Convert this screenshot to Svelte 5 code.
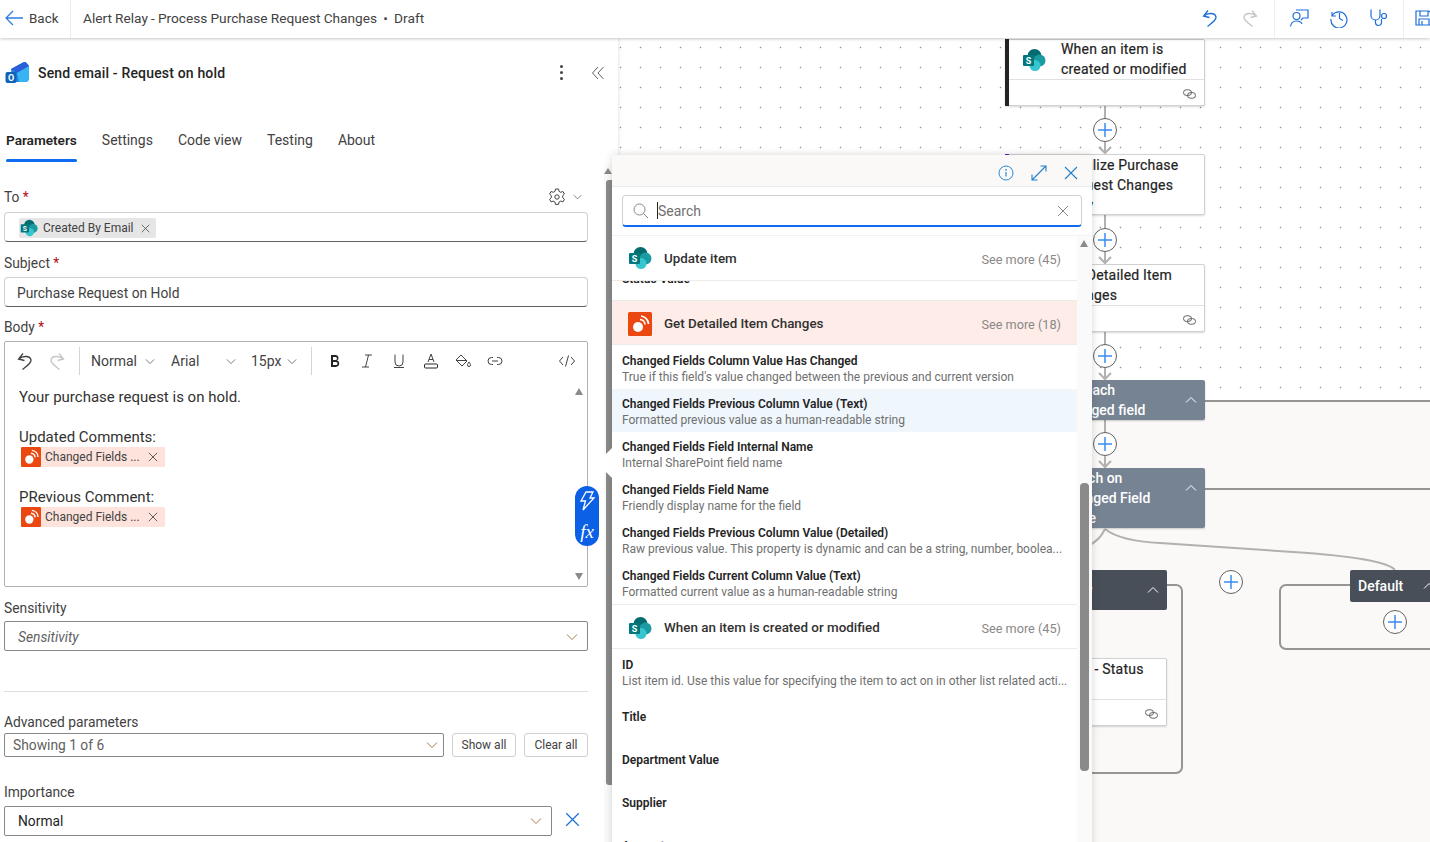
<script>
  const tabs = ['Parameters', 'Settings', 'Code view', 'Testing', 'About'];
  const formatIcons = ['bold', 'italic', 'underline', 'color', 'fill', 'link'];
  const changedItems = [
    { t: 'Changed Fields Column Value Has Changed', d: "True if this field's value changed between the previous and current version" },
    { t: 'Changed Fields Previous Column Value (Text)', d: 'Formatted previous value as a human-readable string', on: true },
    { t: 'Changed Fields Field Internal Name', d: 'Internal SharePoint field name' },
    { t: 'Changed Fields Field Name', d: 'Friendly display name for the field' },
    { t: 'Changed Fields Previous Column Value (Detailed)', d: 'Raw previous value. This property is dynamic and can be a string, number, boolea...' },
    { t: 'Changed Fields Current Column Value (Text)', d: 'Formatted current value as a human-readable string' }
  ];
  const triggerItems = [
    { t: 'ID', d: 'List item id. Use this value for specifying the item to act on in other list related acti...' },
    { t: 'Title', d: '' },
    { t: 'Department Value', d: '' },
    { t: 'Supplier', d: '' },
    { t: 'Amount', d: '' }
  ];
  const OX = 618, OY = 38;
  const plusNodes = [[1105, 130], [1105, 240], [1105, 356], [1105, 444], [1231, 582], [1395, 622]];
  const arrows = [[106, 154], [215, 264], [332, 380], [420, 468]];
  const cards = [
    { x: 1005, y: 39, w: 200, h: 67, lines: ['When an item is', 'created or modified'], tx: 1060, ty: -1, bar: '#242424', div: 39, sp: true },
    { x: 1005, y: 154, w: 200, h: 61, lines: ['Initialize Purchase', 'Request Changes', 'Copy'], tx: 1060, ty: 0, bar: '#6b1fb1' },
    { x: 1005, y: 264, w: 200, h: 68, lines: ['Get Detailed Item', 'Changes'], tx: 1060, ty: 0, div: 40 },
    { x: 1005, y: 658, w: 162, h: 68, lines: ['Set - Status'], tx: 1069, ty: 0, div: 40 }
  ];
  const groups = [
    { y: 380, h: 40, lines: ['For each', 'changed field'] },
    { y: 468, h: 60, lines: ['Switch on', 'Changed Field', 'Value'] }
  ];
</script>

{#snippet sharepoint(size)}
  <svg class="sp" width={size} height={size} viewBox="0 0 24 24" aria-hidden="true">
    <circle cx="12.5" cy="8" r="7" fill="#036c70"/>
    <circle cx="17.5" cy="12.5" r="6" fill="#1a9ba1"/>
    <circle cx="13" cy="17.5" r="5.5" fill="#37c6d0"/>
    <rect x="1" y="7" width="11" height="11" rx="1" fill="#03787c"/>
    <text x="6.5" y="15.8" font-size="9" font-weight="700" text-anchor="middle" fill="#fff" font-family="Roboto, sans-serif">S</text>
  </svg>
{/snippet}

{#snippet rss(size)}
  <svg width={size} height={size} viewBox="0 0 24 24" aria-hidden="true">
    <rect width="24" height="24" rx="1.5" fill="#eb4710"/>
    <circle cx="10" cy="15" r="5" fill="#fff"/>
    <path d="M12 7.5a5.5 5.5 0 0 1 5 5M13 4a8.5 8.5 0 0 1 7.5 8" fill="none" stroke="#fff" stroke-width="1.7"/>
  </svg>
{/snippet}

{#snippet chevron(cls)}
  <svg class={cls} width="12" height="8" viewBox="0 0 12 8" aria-hidden="true"><path d="M1 1.5l5 5 5-5" fill="none" stroke="currentColor" stroke-width="1"/></svg>
{/snippet}

{#snippet cross(size, cls)}
  <svg class={cls} width={size} height={size} viewBox="0 0 12 12" aria-hidden="true"><path d="M1 1l10 10M11 1L1 11" fill="none" stroke="currentColor" stroke-width="1"/></svg>
{/snippet}

{#snippet linkIcon()}
  <svg width="13" height="10" viewBox="0 0 13 10" aria-hidden="true"><g fill="none" stroke="#616161" stroke-width="1"><rect x=".5" y=".8" width="8" height="5.6" rx="2.8"/><rect x="4.5" y="3.6" width="8" height="5.6" rx="2.8"/></g></svg>
{/snippet}

{#snippet undo(c)}
  <svg width="20" height="20" viewBox="0 0 20 20" aria-hidden="true"><path d="M8 2.5L3.5 8l6 1.500M3.500 8C8 4.500 15 4.500 16 9c.5 3-4 6-8.500 9.500" fill="none" stroke={c} stroke-width="1.300"/></svg>
{/snippet}
{#snippet redo(c)}
  <svg width="20" height="20" viewBox="0 0 20 20" aria-hidden="true"><path d="M12 2.500L16.500 8l-6 1.500M16.500 8C12 4.500 5 4.500 4 9c-.5 3 4 6 8.500 9.500" fill="none" stroke={c} stroke-width="1.300"/></svg>
{/snippet}

{#snippet field(label)}
  <span class="token"><span class="tokicon">{@render rss(20)}</span><span class="toktext">{label}</span>{@render cross(10, 'tokx')}</span>
{/snippet}

<div class="page">
  <header class="topbar">
    <button class="back">
      <svg width="20" height="20" viewBox="0 0 20 20" aria-hidden="true"><path d="M9 3l-7 7 7 7M2 10h17" fill="none" stroke="#2f7fe0" stroke-width="1.300"/></svg>
      <span>Back</span>
    </button>
    <div class="crumb">Alert Relay - Process Purchase Request Changes&nbsp; • &nbsp;Draft</div>
    <div class="actions">
      <div class="act-group">
        <span class="act">{@render undo('#1f6fd6')}</span>
        <span class="act">{@render redo('#c8c6c4')}</span>
      </div>
      <div class="act-group bordered">
        <span class="act"><svg width="20" height="20" viewBox="0 0 20 20" aria-hidden="true"><g fill="none" stroke="#1f6fd6" stroke-width="1.200"><circle cx="7.500" cy="8" r="3.500"/><path d="M1.500 18.500c.5-3.500 2.500-5.500 6-5.500s5 1.500 5.500 3M7 2h12v8h-5l-2 2"/></g></svg></span>
        <span class="act"><svg width="20" height="20" viewBox="0 0 20 20" aria-hidden="true"><g fill="none" stroke="#1f6fd6" stroke-width="1.200"><path d="M3 4v4h4M3.300 7.500A8 8 0 1 1 2 11"/><path d="M10.500 5v5.500l3.500 2"/></g></svg></span>
        <span class="act"><svg width="20" height="20" viewBox="0 0 20 20" aria-hidden="true"><g fill="none" stroke="#1f6fd6" stroke-width="1.200"><path d="M2 1.500v6a4.500 4.500 0 0 0 9 0v-6"/><path d="M6.500 12v2.500a3 3 0 0 0 6 0V11"/><circle cx="15" cy="8" r="2.500"/></g></svg></span>
      </div>
      <div class="act-group bordered save">
        <span class="act"><svg width="20" height="20" viewBox="0 0 20 20" aria-hidden="true"><g fill="none" stroke="#1f6fd6" stroke-width="1.200"><path d="M2 3h13l3 3v11H2z"/><path d="M6 3v5h8V3M5 17v-6h10v6M8 13v4"/></g></svg></span>
      </div>
    </div>
  </header>

  <div class="main">
    <aside class="panel">
      <div class="panel-head">
        <svg width="24" height="24" viewBox="0 0 24 24" aria-hidden="true">
          <path d="M6 8L18 1.500q2-1 3.500.5L24 5v12a4 4 0 0 1-4 4H7z" fill="#1b8be8"/>
          <path d="M6 8L18 1.500q2-1 3.500.5L24 5 12 12z" fill="#2a5fd8"/>
          <path d="M12 12L24 5v12a4 4 0 0 1-4 4h-6z" fill="#38b4f2"/>
          <rect x="0.500" y="11" width="11" height="11" rx="2" fill="#0f63b8"/>
          <text x="6" y="19.800" font-size="9" font-weight="700" text-anchor="middle" fill="#fff" font-family="Roboto, sans-serif">O</text>
        </svg>
        <h1>Send email - Request on hold</h1>
        <span class="kebab"><i></i><i></i><i></i></span>
        <svg class="collapse" width="14" height="14" viewBox="0 0 14 14" aria-hidden="true"><path d="M7 1L1.500 7 7 13M12.500 1L7 7l5.500 6" fill="none" stroke="#616161" stroke-width="1"/></svg>
      </div>

      <nav class="tabs">
        {#each tabs as tab, i}
          <span class="tab" class:active={i === 0}>{tab}</span>
        {/each}
      </nav>

      <div class="form">
        <div class="label to-label">
          <span>To <b>*</b></span>
          <span class="gear">
            <svg width="20" height="20" viewBox="0 0 20 20" aria-hidden="true"><g fill="none" stroke="#424242" stroke-width="1"><path d="M8.500 2h3l.5 2.300 1.700 1 2.200-.8 1.500 2.600-1.700 1.600v2l1.700 1.600-1.500 2.600-2.200-.8-1.700 1-.5 2.300h-3l-.5-2.300-1.700-1-2.200.8-1.500-2.600 1.700-1.600v-2L2.600 7.100l1.500-2.600 2.200.8 1.700-1z"/><circle cx="10" cy="10" r="2.200"/></g></svg>
            {@render chevron('gear-chev')}
          </span>
        </div>
        <div class="box nudge to-box">
          <span class="chip">{@render sharepoint(18)}<span>Created By Email</span>{@render cross(9, 'chipx')}</span>
        </div>

        <div class="label subj-label">Subject <b>*</b></div>
        <div class="box nudge subj-box">Purchase Request on Hold</div>

        <div class="label body-label">Body <b>*</b></div>
        <div class="editor">
          <div class="toolbar">
            <span class="tb">{@render undo('#424242')}</span>
            <span class="tb">{@render redo('#c8c6c4')}</span>
            <span class="sep first"></span>
            <span class="dd normal">Normal {@render chevron('dd-chev')}</span>
            <span class="dd arial">Arial {@render chevron('dd-chev')}</span>
            <span class="dd px">15px {@render chevron('dd-chev')}</span>
            <span class="sep"></span>
            {#each formatIcons as f}
              <span class="tb fmt">
                {#if f === 'bold'}
                  <svg width="16" height="16" viewBox="0 0 16 16" aria-hidden="true"><path d="M4 2h4.500a3 3 0 0 1 1.500 5.600A3.300 3.300 0 0 1 9 14H4zM6 4v3h2.500a1.500 1.500 0 0 0 0-3zm0 5v3h3a1.500 1.500 0 0 0 0-3z" fill="#242424" fill-rule="evenodd"/></svg>
                {:else if f === 'italic'}
                  <svg width="16" height="16" viewBox="0 0 16 16" aria-hidden="true"><path d="M6 2h7M3 14h7M9.500 2L6.500 14" fill="none" stroke="#424242"/></svg>
                {:else if f === 'underline'}
                  <svg width="16" height="16" viewBox="0 0 16 16" aria-hidden="true"><path d="M4 1.500V9a4 4 0 0 0 8 0V1.500M3 14.500h10" fill="none" stroke="#424242"/></svg>
                {:else if f === 'color'}
                  <svg width="16" height="16" viewBox="0 0 16 16" aria-hidden="true"><path d="M5 9l3-8 3 8M6 6.500h4" fill="none" stroke="#424242"/><rect x="1.500" y="11" width="13" height="4" rx="1" fill="none" stroke="#242424"/></svg>
                {:else if f === 'fill'}
                  <svg width="18" height="16" viewBox="0 0 18 16" aria-hidden="true"><path d="M7 2l6 6-5 5-6-6zM2 7.500h11" fill="none" stroke="#424242"/><path d="M15 9c1 1.500 1.500 2.200 1.500 3a1.500 1.500 0 0 1-3 0c0-.8.500-1.500 1.500-3z" fill="none" stroke="#424242"/></svg>
                {:else}
                  <svg width="16" height="16" viewBox="0 0 16 16" aria-hidden="true"><path d="M6 4.500H4.500a3.500 3.500 0 0 0 0 7H6M10 4.500h1.500a3.500 3.500 0 0 1 0 7H10M5 8h6" fill="none" stroke="#424242"/></svg>
                {/if}
              </span>
            {/each}
            <span class="tb code"><svg width="18" height="16" viewBox="0 0 18 16" aria-hidden="true"><path d="M5 4L1.500 8 5 12M13 4l3.500 4-3.500 4M10.500 2.500l-3 11" fill="none" stroke="#424242"/></svg></span>
          </div>
          <div class="body-text">
            <p>Your purchase request is on hold.</p>
            <p class="gap">Updated Comments:</p>
            {@render field('Changed Fields ...')}
            <p class="gap">PRevious Comment:</p>
            {@render field('Changed Fields ...')}
          </div>
          <i class="arr up"></i>
          <i class="arr down"></i>
          <div class="pill">
            <svg width="18" height="22" viewBox="0 0 18 22" aria-hidden="true"><path d="M8 2h7l-3 6h4L5 20l2.500-9H3z" fill="none" stroke="#fff" stroke-width="1.300"/></svg>
            <span>fx</span>
          </div>
        </div>

        <div class="label sens-label">Sensitivity</div>
        <div class="box nudge select sens"><em>Sensitivity</em>{@render chevron('sel-chev')}</div>

        <hr />

        <div class="label adv-label">Advanced parameters</div>
        <div class="adv-row">
          <div class="box select showing"><span>Showing 1 of 6</span>{@render chevron('sel-chev')}</div>
          <span class="btn">Show all</span>
          <span class="btn">Clear all</span>
        </div>

        <div class="label imp-label">Importance</div>
        <div class="imp-row">
          <div class="box select imp"><span>Normal</span>{@render chevron('sel-chev')}</div>
          {@render cross(15, 'imp-x')}
        </div>
      </div>

      <div class="panel-track"><i class="arr up2"></i><div class="panel-thumb"></div></div>
    </aside>

    <section class="canvas">
      <svg class="wires" viewBox="618 38 812 804" aria-hidden="true">
        <path d="M1060 401H1430V842H1060z" fill="#faf9f8"/>
        <g fill="none" stroke="#979593" stroke-width="2">
          <path d="M1205 401H1430M1205 489H1430"/>
          <path d="M1167 585H1176a6 6 0 0 1 6 6V767a6 6 0 0 1-6 6H1060"/>
          <path d="M1350 585H1286a6 6 0 0 0-6 6V643a6 6 0 0 0 6 6H1430"/>
        </g>
        <g fill="none" stroke="#b3b0ad" stroke-width="2">
          {#each arrows as [a, b]}
            <path d="M1105 {a}V{b - 1}M1099 {b - 7}L1105 {b - 1}L1111 {b - 7}"/>
          {/each}
          <path d="M1105 529Q1120 541 1160 543L1293 552Q1385 558 1395 570"/>
          <path d="M1105 529Q1100 540 1088 546"/>
        </g>
      </svg>

      {#each cards as c}
        <div class="card" style="left:{c.x - OX}px;top:{c.y - OY}px;width:{c.w}px;height:{c.h}px">
          {#if c.bar}<i class="cardbar" style="background:{c.bar}"></i>{/if}
          {#if c.sp}<span class="cardicon">{@render sharepoint(24)}</span>{/if}
          <div class="cardtext" style="left:{c.tx - c.x}px;top:{c.ty}px">
            {#each c.lines as l}<div>{l}</div>{/each}
          </div>
          {#if c.div}
            <div class="carddiv" style="top:{c.div}px"></div>
            <span class="cardlink">{@render linkIcon()}</span>
          {/if}
        </div>
      {/each}

      {#each groups as g}
        <div class="group" style="top:{g.y - OY}px;height:{g.h}px">
          <div class="grouptext">{#each g.lines as l}<div>{l}</div>{/each}</div>
          <svg class="groupchev" width="12" height="8" viewBox="0 0 12 8" aria-hidden="true"><path d="M1 6.500l5-5 5 5" fill="none" stroke="#fff" stroke-width="1"/></svg>
        </div>
      {/each}

      <div class="case case-left">
        <span>Case</span>
        <svg class="groupchev" width="12" height="8" viewBox="0 0 12 8" aria-hidden="true"><path d="M1 6.500l5-5 5 5" fill="none" stroke="#fff" stroke-width="1"/></svg>
      </div>
      <div class="case case-default">
        <span>Default</span>
        <svg class="groupchev" width="12" height="8" viewBox="0 0 12 8" aria-hidden="true"><path d="M1 6.500l5-5 5 5" fill="none" stroke="#fff" stroke-width="1"/></svg>
      </div>

      {#each plusNodes as [x, y]}
        <span class="plus" style="left:{x - OX - 12}px;top:{y - OY - 12}px">
          <svg width="14" height="14" viewBox="0 0 14 14" aria-hidden="true"><path d="M7 0v14M0 7h14" stroke="#3b8cf0" stroke-width="1.500"/></svg>
        </span>
      {/each}
    </section>

    <div class="picker">
      <i class="callout"></i>
      <div class="pick-head">
        <svg width="16" height="16" viewBox="0 0 16 16" aria-hidden="true"><circle cx="8" cy="8" r="7" fill="none" stroke="#2b88d8"/><path d="M8 7v4.500" stroke="#2b88d8" stroke-width="1.200"/><circle cx="8" cy="4.800" r=".9" fill="#2b88d8"/></svg>
        <svg width="16" height="16" viewBox="0 0 16 16" aria-hidden="true"><path d="M1 15L15 1M9.500 1H15v5.500M1 9.500V15h5.500" fill="none" stroke="#1f7fd0" stroke-width="1.100"/></svg>
        <svg width="14" height="14" viewBox="0 0 14 14" aria-hidden="true"><path d="M1 1l12 12M13 1L1 13" fill="none" stroke="#1f7fd0" stroke-width="1.100"/></svg>
      </div>
      <div class="search-wrap">
        <div class="search">
          <svg width="16" height="16" viewBox="0 0 16 16" aria-hidden="true"><circle cx="6.500" cy="6.500" r="5.500" fill="none" stroke="#8a8886"/><path d="M10.500 10.500L15 15" stroke="#8a8886"/></svg>
          <i class="caret"></i>
          <span>Search</span>
          {@render cross(12, 'search-x')}
        </div>
      </div>
      <div class="pick-body">
        <div class="list">
          <div class="sec">
            {@render sharepoint(24)}
            <span class="sec-name">Update item</span>
            <span class="more">See more (45)</span>
          </div>
          <div class="clipped"><div>Status Value</div></div>
          <div class="sec sec-hot">
            {@render rss(24)}
            <span class="sec-name">Get Detailed Item Changes</span>
            <span class="more">See more (18)</span>
          </div>
          <div class="items">
            {#each changedItems as it}
              <div class="item" class:on={it.on}>
                <div class="it-t">{it.t}</div>
                <div class="it-d">{it.d}</div>
              </div>
            {/each}
          </div>
          <div class="sec sec-last">
            {@render sharepoint(24)}
            <span class="sec-name">When an item is created or modified</span>
            <span class="more">See more (45)</span>
          </div>
          <div class="items">
            {#each triggerItems as it}
              <div class="item" class:nodesc={!it.d}>
                <div class="it-t">{it.t}</div>
                {#if it.d}<div class="it-d">{it.d}</div>{/if}
              </div>
            {/each}
          </div>
        </div>
        <div class="pick-track"><i class="arr up3"></i><div class="pick-thumb"></div></div>
      </div>
    </div>
  </div>
</div>

<style>
  :global(body) { margin: 0; background: #fff; overflow: hidden; }
  * { box-sizing: border-box; }
  .page { width: 1430px; height: 842px; overflow: hidden; font-family: Roboto, "Noto Sans", sans-serif; font-size: 14px; color: #242424; display: flex; flex-direction: column; }

  .topbar { height: 38px; flex: none; display: flex; align-items: stretch; background: #fff; box-shadow: 0 1px 3px rgba(0,0,0,.22); position: relative; z-index: 5; }
  .back { all: unset; display: flex; align-items: center; gap: 5px; width: 71px; padding: 0 0 2px 4px; border-right: 1px solid #edebe9; color: #424242; font-size: 13.4px; box-sizing: border-box; }
  .crumb { margin-left: 12px; color: #424242; font-size: 13.7px; white-space: nowrap; display: flex; align-items: center; padding-bottom: 2px; word-spacing: -.3px; }
  .actions { margin-left: auto; display: flex; margin-right: -14px; flex: none; }
  .act-group { display: flex; align-items: center; padding: 0 4px 2px; }
  .bordered { border-left: 1px solid #f0efee; }
  .save { padding: 0 0 2px; }
  .act { width: 40px; display: flex; justify-content: center; }

  .main { flex: 1; display: flex; position: relative; min-height: 0; }
  .panel { width: 618px; flex: none; background: #fff; position: relative; z-index: 2; box-shadow: 1px 0 3px rgba(0,0,0,.1); overflow: hidden; }
  .panel-head { height: 69px; display: flex; align-items: center; padding-left: 5px; }
  .panel-head h1 { margin: 0 0 0 9px; font-size: 14px; font-weight: 500; letter-spacing: .17px; color: #242424; flex: 1; }
  .kebab { display: flex; flex-direction: column; gap: 3px; margin-right: 28px; }
  .kebab i { width: 3px; height: 3px; border-radius: 50%; background: #424242; }
  .collapse { margin-right: 13px; }

  .tabs { display: flex; gap: 25px; height: 42px; margin-top: 13px; padding-left: 6px; }
  .tab { height: 42px; line-height: 40px; color: #424242; font-size: 14px; position: relative; }
  .tab.active { font-weight: 600; font-size: 13.6px; color: #242424; }
  .tab.active::after { content: ''; position: absolute; left: 0; right: 0; bottom: 0; height: 3px; border-radius: 2px; background: #0f6cf0; }

  .form { padding-left: 4px; width: 588px; margin-top: 25px; }
  .label { height: 20px; line-height: 20px; font-size: 13.8px; color: #424242; }
  .label b { color: #b10e1c; font-weight: 400; }
  .to-label { display: flex; justify-content: space-between; margin-bottom: 5px; }
  .gear { display: flex; align-items: center; gap: 6px; margin-right: 6px; }
  :global(.gear-chev) { width: 9px; height: 6px; color: #616161; }
  .box { border: 1px solid #d1d1d1; border-bottom-color: #616161; border-radius: 4px; height: 30px; display: flex; align-items: center; padding: 0 12px; color: #424242; background: #fff; font-size: 13.8px; }
  .nudge { padding-top: 2px; }
  .to-box { padding-left: 14px; }
  .chip { display: flex; align-items: center; height: 20px; width: 137px; background: #e6e6e6; border-radius: 2px; font-size: 12px; padding-left: 1px; }
  .chip span { margin-left: 5px; }
  :global(.chipx) { margin-left: 7px; color: #424242; }
  .subj-label { margin-top: 11px; margin-bottom: 4px; }
  .body-label { margin-top: 10px; margin-bottom: 4px; }
  .editor { height: 246px; border: 1px solid #b3b0ad; border-radius: 2px; position: relative; }
  .toolbar { display: flex; align-items: center; height: 38px; padding-left: 4px; }
  .tb { width: 32px; display: flex; justify-content: center; align-items: center; flex: none; }
  .sep { width: 1px; height: 28px; background: #d6d4d2; flex: none; margin-left: 6px; }
  .sep.first { margin-right: 11px; }
  .dd { display: flex; align-items: center; justify-content: space-between; flex: none; color: #424242; }
  .dd.normal { width: 72px; padding-right: 8px; }
  .dd.arial { width: 72px; margin-left: 8px; padding-right: 7px; }
  .dd.px { width: 52px; margin-left: 8px; padding-right: 6px; }
  :global(.dd-chev) { width: 10px; height: 7px; color: #616161; }
  .sep:not(.first) { margin-left: 8px; margin-right: 7px; }
  .code { margin-left: auto; margin-right: 4px; }
  .body-text { padding: 7px 0 0 14px; font-size: 15px; color: #323130; line-height: 20px; }
  .body-text p { margin: 0; height: 20px; }
  .body-text .gap { margin-top: 20px; }
  .token { display: flex; align-items: center; width: 144px; height: 20px; margin-left: 2px; background: #fde3dc; font-size: 12px; border-radius: 1px; }
  .tokicon { display: flex; width: 20px; height: 20px; flex: none; }
  .toktext { margin-left: 4px; color: #424242; width: 94px; white-space: nowrap; flex: none; }
  :global(.tokx) { margin-left: 9px; color: #424242; }
  .arr { position: absolute; width: 0; height: 0; border-left: 4.500px solid transparent; border-right: 4.500px solid transparent; }
  .arr.up { right: 4px; top: 46px; border-bottom: 7px solid #8a8a8a; }
  .arr.down { right: 4px; bottom: 6px; border-top: 7px solid #8a8a8a; }
  .pill { position: absolute; left: 570px; top: 144px; width: 24px; height: 60px; border-radius: 12px; background: #0b60e6; color: #fff; display: flex; flex-direction: column; align-items: center; justify-content: space-between; padding: 4px 0 3px; z-index: 3; }
  .pill span { font-family: "Liberation Serif", serif; font-style: italic; font-size: 19px; line-height: 22px; }
  .sens-label { margin-top: 11px; margin-bottom: 3px; }
  .select { justify-content: space-between; border-color: #8a8886; border-radius: 2px; }
  .select em { color: #616161; }
  .sens { padding-left: 13px; }
  :global(.sel-chev) { color: #a07c48; margin-right: -3px; }
  hr { margin: 40px 0 20px; border: 0; border-top: 1px solid #e1dfdd; }
  .adv-label { margin-bottom: 1px; }
  .adv-row { display: flex; height: 24px; gap: 8px; }
  .showing { height: 24px; width: 440px; padding: 0 8px; color: #616161; flex: none; }
  .btn { width: 64px; height: 24px; border: 1px solid #d1d1d1; border-radius: 3px; font-size: 12px; display: flex; align-items: center; justify-content: center; color: #424242; flex: none; }
  .imp-label { margin-top: 25px; margin-bottom: 4px; }
  .imp-row { display: flex; align-items: center; }
  .imp { width: 548px; padding-left: 13px; color: #242424; }
  :global(.imp-x) { color: #1f6fd6; margin-left: 13px; margin-top: -3px; }

  .panel-track { position: absolute; right: 6px; top: 127px; bottom: 0; width: 8px; background: #fafafa; z-index: 1; }
  .panel-thumb { position: absolute; top: 15px; left: 2px; width: 6px; height: 605px; background: #8a8a8a; border-radius: 3px 0 0 3px; }
  .arr.up2 { left: 0; top: 3px; border-bottom: 6px solid #8a8a8a; }

  .canvas { flex: 1; position: relative; background-color: #fff; background-image: radial-gradient(circle at 2.500px 9.500px, #8f8f8f .6px, transparent 1.100px); background-size: 20px 20px; overflow: hidden; }
  .wires { position: absolute; left: 0; top: 0; width: 812px; height: 804px; }
  .card { position: absolute; background: #fff; border: 1px solid #d1d1d1; border-radius: 2px; box-shadow: 0 1px 2px rgba(0,0,0,.16); font-weight: 500; }
  .cardbar { position: absolute; left: -1px; top: -1px; bottom: -1px; width: 4px; }
  .cardicon { position: absolute; left: 16px; top: 8px; }
  .cardtext { position: absolute; white-space: nowrap; line-height: 20px; color: #242424; font-size: 14px; letter-spacing: .2px; font-weight: 400; -webkit-text-stroke: .2px #242424; }
  .carddiv { position: absolute; left: 3px; right: 0; height: 1px; background: #e1e1e1; }
  .cardlink { position: absolute; right: 8px; bottom: 6px; display: flex; }
  .group { position: absolute; left: 387px; width: 200px; background: #768393; border-radius: 2px; box-shadow: 0 1px 2px rgba(0,0,0,.2); color: #fff; font-weight: 500; }
  .grouptext { position: absolute; left: 56px; top: 0; line-height: 20px; white-space: nowrap; }
  .groupchev { position: absolute; top: 16px; right: 8px; }
  .case { position: absolute; background: #484f58; border-radius: 2px; color: #fff; font-weight: 500; }
  .case-left { left: 387px; top: 532px; width: 162px; height: 40px; padding: 10px 0 0 56px; }
  .case-default { left: 732px; top: 532px; width: 90px; height: 32px; padding: 6px 0 0 8px; line-height: 20px; }
  .case-default .groupchev { top: 12px; right: 5px; }
  .plus { position: absolute; width: 24px; height: 24px; border-radius: 50%; background: #fff; border: 1px solid #616161; display: flex; align-items: center; justify-content: center; }

  .picker { position: absolute; left: 612px; top: 117px; width: 480px; height: 700px; background: #fff; box-shadow: 0 0 8px rgba(0,0,0,.16); z-index: 4; display: flex; flex-direction: column; }
  .callout { position: absolute; left: -15px; top: 293px; width: 0; height: 0; border-top: 15px solid transparent; border-bottom: 15px solid transparent; border-right: 15px solid #fff; }
  .pick-head { height: 32px; flex: none; background: #faf9f8; border-bottom: 1px solid #edebe9; display: flex; align-items: center; justify-content: flex-end; gap: 17px; padding: 4px 14px 0 0; }
  .search-wrap { padding: 8px 10px 8px; flex: none; }
  .search { height: 32px; border: 1px solid #d1d1d1; border-bottom: 2px solid #0f6cf0; border-radius: 4px; display: flex; align-items: center; padding-left: 10px; position: relative; color: #707070; font-size: 14px; }
  .caret { width: 1px; height: 17px; background: #242424; margin-left: 8px; }
  :global(.search-x) { margin-left: auto; margin-right: 12px; color: #8a8886; }
  .pick-body { flex: 1; display: flex; min-height: 0; border-top: 1px solid #f3f2f1; }
  .list { width: 465px; flex: none; overflow: hidden; }
  .sec { height: 45px; display: flex; align-items: center; padding: 0 16px; border-bottom: 1px solid #edebe9; background: #fff; position: relative; }
  .sec-name { margin-left: 12px; font-size: 13.4px; font-weight: 500; color: #323130; flex: 1; }
  .more { font-size: 12.7px; color: #8a8886; margin-top: 2px; }
  .clipped { height: 19px; overflow: hidden; padding-left: 10px; font-size: 12px; font-weight: 600; color: #242424; }
  .clipped div { margin-top: -10px; line-height: 16px; }
  .sec-hot { background: #fdece8; border-top: 1px solid #edebe9; padding-top: 2px; }
  .items { padding-top: 1px; }
  .item { height: 43px; padding: 7px 10px 0; }
  .item.on { background: #eff6fc; }
  .item.nodesc { padding-top: 16px; }
  .it-t { font-size: 12px; font-weight: 600; color: #242424; line-height: 16px; white-space: nowrap; }
  .it-d { font-size: 12px; color: #707070; line-height: 16px; white-space: nowrap; }
  .sec-last { border-top: 1px solid #edebe9; padding-top: 2px; }
  .pick-track { flex: 1; background: #fafafa; position: relative; }
  .arr.up3 { left: 3px; top: 4px; border-bottom: 7px solid #8a8a8a; }
  .pick-thumb { position: absolute; left: 3px; top: 247px; width: 9px; height: 288px; background: #8a8a8a; border-radius: 4px; }
  svg { flex: none; }
</style>
